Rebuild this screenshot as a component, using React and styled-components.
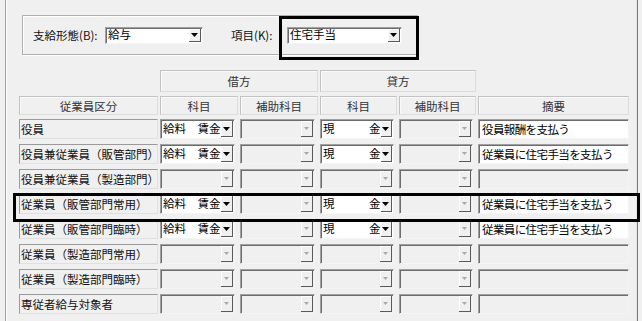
import React from "react";
import styled, { createGlobalStyle } from "styled-components";

const COLS = "139px 78px 78px 77px 77px 151px";

const DR = "給料　賃金";
const CR = "現　　　金";

const rows = [
  { name: "役員", dr: DR, cr: CR, memo: "役員報酬を支払う" },
  { name: "役員兼従業員（販管部門）", dr: DR, cr: CR, memo: "従業員に住宅手当を支払う" },
  { name: "役員兼従業員（製造部門）" },
  { name: "従業員（販管部門常用）", dr: DR, cr: CR, memo: "従業員に住宅手当を支払う" },
  { name: "従業員（販管部門臨時）", dr: DR, cr: CR, memo: "従業員に住宅手当を支払う" },
  { name: "従業員（製造部門常用）" },
  { name: "従業員（製造部門臨時）" },
  { name: "専従者給与対象者" }
];

const Arrow = ({ disabled }) =>
  disabled ? (
    <svg width="5" height="3" viewBox="0 0 5 3">
      <polygon points="0,0 5,0 2.5,3" fill="#a8a8a8" />
    </svg>
  ) : (
    <svg width="7" height="4" viewBox="0 0 7 4">
      <polygon points="0,0 7,0 3.5,4" fill="#000" />
    </svg>
  );

const Combo = ({ value, disabled, width, height }) => (
  <ComboBox $disabled={disabled} $w={width} $h={height}>
    <ComboText>{value}</ComboText>
    <DropButton>
      <Arrow disabled={disabled} />
    </DropButton>
  </ComboBox>
);

export default function App() {
  return (
    <Page>
      <GlobalStyle />
      <Frame>
        <GroupBox>
          <Label $w={72}>支給形態(B):</Label>
          <Combo value="給与" width="98px" height="17px" />
          <Label $w={56} $ml={28}>
            項目(K):
          </Label>
          <Combo value="住宅手当" width="115px" height="17px" />
        </GroupBox>

        <Table>
          <HeaderGrid>
            <div />
            <HeadCell $col="2 / 4">借方</HeadCell>
            <HeadCell $col="4 / 6">貸方</HeadCell>
            <div />
            <HeadCell>従業員区分</HeadCell>
            <HeadCell>科目</HeadCell>
            <HeadCell>補助科目</HeadCell>
            <HeadCell>科目</HeadCell>
            <HeadCell>補助科目</HeadCell>
            <HeadCell>摘要</HeadCell>
          </HeaderGrid>

          <Body>
            {rows.map((r, i) => (
              <Row key={i}>
                <NameCell>{r.name}</NameCell>
                <Combo value={r.dr} disabled={!r.dr} width="calc(100% - 3px)" height="100%" />
                <Combo disabled width="calc(100% - 3px)" height="100%" />
                <Combo value={r.cr} disabled={!r.cr} width="calc(100% - 3px)" height="100%" />
                <Combo disabled width="calc(100% - 3px)" height="100%" />
                <MemoBox $disabled={!r.memo}>{r.memo}</MemoBox>
              </Row>
            ))}
          </Body>
        </Table>
      </Frame>

      <Highlight $x={279} $y={16} $w={140} $h={44} />
      <Highlight $x={13} $y={193} $w={627} $h={29} />
    </Page>
  );
}

// ==== STYLES ====
const GlobalStyle = createGlobalStyle`
  body {
    margin: 0;
    background: #f0f0f0;
  }
`;

const Page = styled.div`
  position: relative;
  width: 642px;
  height: 321px;
  overflow: hidden;
  background: #f0f0f0;
  font-family: "Noto Sans CJK JP", "Noto Sans", sans-serif;
  font-size: 11.5px;
  color: #000;
`;

const Frame = styled.div`
  box-sizing: border-box;
  margin-left: 5px;
  width: 633px;
  height: 321px;
  padding-top: 15px;
  border-left: 1px solid #a0a0a0;
  border-right: 1px solid #7a7a7a;
  box-shadow: inset 1px 0 0 #fff, inset -1px 0 0 #e3e3e3;
`;

const GroupBox = styled.div`
  box-sizing: border-box;
  display: flex;
  align-items: center;
  margin-left: 16px;
  width: 396px;
  height: 40px;
  padding-left: 10px;
  border: 1px solid #b0b0b0;
  box-shadow: inset 1px 1px 0 #fff, 1px 1px 0 #fff;
`;

const Label = styled.span`
  width: ${(p) => p.$w}px;
  margin-left: ${(p) => p.$ml || 0}px;
  white-space: nowrap;
  color: #111;
`;

const ComboBox = styled.div`
  box-sizing: border-box;
  display: flex;
  align-items: stretch;
  width: ${(p) => p.$w};
  height: ${(p) => p.$h};
  padding: 0 1px;
  background: ${(p) => (p.$disabled ? "#f0f0f0" : "#fff")};
  border: 1px solid;
  border-color: #a0a0a0 #f4f4f4 #f4f4f4 #a0a0a0;
  box-shadow: inset 1px 1px 0 #6d6d6d;
`;

const ComboText = styled.span`
  flex: 1;
  display: flex;
  align-items: center;
  padding-left: 1px;
  white-space: nowrap;
  line-height: 1;
`;

const DropButton = styled.span`
  box-sizing: border-box;
  display: flex;
  align-items: center;
  justify-content: center;
  width: 12px;
  margin: 1px 0;
  background: #f0f0f0;
  border-right: 1px solid #5a5a5a;
  border-bottom: 1px solid #5a5a5a;
  box-shadow: inset 1px 1px 0 #fff;
`;

const Table = styled.div`
  margin: 15px 0 0 13px;
`;

const HeaderGrid = styled.div`
  display: grid;
  grid-template-columns: ${COLS};
  grid-template-rows: 22px 19px;
  column-gap: 2px;
  row-gap: 4px;
`;

const HeadCell = styled.div`
  grid-column: ${(p) => p.$col || "auto"};
  box-sizing: border-box;
  display: flex;
  align-items: center;
  justify-content: center;
  border: 1px solid;
  border-color: #c2c2c2 #dcdcdc #dcdcdc #c2c2c2;
  box-shadow: inset 1px 1px 0 #fafafa;
  color: #333;
`;

const Body = styled.div`
  display: flex;
  flex-direction: column;
  gap: 5px;
  margin-top: 4px;
`;

const Row = styled.div`
  display: grid;
  grid-template-columns: ${COLS};
  column-gap: 2px;
  height: 20px;
`;

const NameCell = styled.div`
  box-sizing: border-box;
  display: flex;
  align-items: center;
  padding-left: 1px;
  white-space: nowrap;
  border: 1px solid;
  border-color: #9a9a9a #e0e0e0 #e0e0e0 #9a9a9a;
  color: #111;
`;

const MemoBox = styled.div`
  box-sizing: border-box;
  display: flex;
  align-items: center;
  padding-left: 3px;
  white-space: nowrap;
  overflow: hidden;
  letter-spacing: -0.6px;
  background: ${(p) => (p.$disabled ? "#f0f0f0" : "#fff")};
  border: 1px solid;
  border-color: #a0a0a0 #f4f4f4 #f4f4f4 #a0a0a0;
  box-shadow: inset 1px 1px 0 #6d6d6d;
`;

const Highlight = styled.div`
  position: absolute;
  left: ${(p) => p.$x}px;
  top: ${(p) => p.$y}px;
  width: ${(p) => p.$w}px;
  height: ${(p) => p.$h}px;
  box-sizing: border-box;
  border: 3px solid #000;
  pointer-events: none;
`;
